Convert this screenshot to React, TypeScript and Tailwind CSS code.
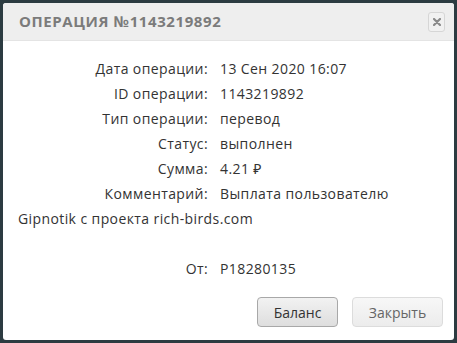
import React from 'react';

const rows: [string, string][] = [
  ['Дата операции:', '13 Сен 2020 16:07'],
  ['ID операции:', '1143219892'],
  ['Тип операции:', 'перевод'],
  ['Статус:', 'выполнен'],
  ['Сумма:', '4.21 ₽'],
];

const Row: React.FC<{ label: string; children: React.ReactNode }> = ({ label, children }) => (
  <div className="leading-[25px]">
    <span className="inline-block w-[190px] text-right">{label}</span>
    <span className="ml-[12px]">{children}</span>
  </div>
);

const App: React.FC = () => {
  return (
    <div className="w-[457px] h-[343px] bg-[#2c3b41] p-[3px]" style={{ fontFamily: '"Open Sans", "Noto Sans", sans-serif' }}>
      <div className="h-[337px] w-[451px] bg-white rounded-[3px] overflow-hidden flex flex-col">
        <div className="h-[38px] bg-[#eeeeee] flex items-center justify-between pl-[16px] pr-[9px] border-b border-[#e4e4e4]">
          <h1 className="text-[15px] font-bold tracking-[0.6px] text-[#7b7b7b]">ОПЕРАЦИЯ №1143219892</h1>
          <button className="w-[17px] h-[20px] rounded-[3px] border border-[#d6d6d6] bg-[#f1f1f1] flex items-center justify-center">
            <svg width="8" height="8" viewBox="0 0 8 8">
              <path d="M1 1 L7 7 M7 1 L1 7" stroke="#8a8a8a" strokeWidth="2.2" strokeLinecap="round" />
            </svg>
          </button>
        </div>
        <div className="px-[15px] pt-[15px] text-[14px] tracking-[0.4px] text-[#333]">
          {rows.map(([l, v]) => (
            <Row key={l} label={l}>{v}</Row>
          ))}
          <Row label="Комментарий:">Выплата пользователю Gipnotik с проекта rich-birds.com</Row>
          <div className="h-[25px]" />
          <Row label="От:">P18280135</Row>
        </div>
        <div className="flex justify-end gap-[14px] pr-[11px] mt-[16px]">
          <button className="h-[30px] w-[81px] rounded-[4px] border border-[#a8a8a8] bg-gradient-to-b from-[#f2f2f2] to-[#dedede] text-[14px] text-[#333]">
            Баланс
          </button>
          <button className="h-[30px] w-[91px] rounded-[4px] border border-[#dcdcdc] bg-gradient-to-b from-[#f7f7f7] to-[#ececec] text-[14px] text-[#666]">
            Закрыть
          </button>
        </div>
      </div>
    </div>
  );
};

export default App;
